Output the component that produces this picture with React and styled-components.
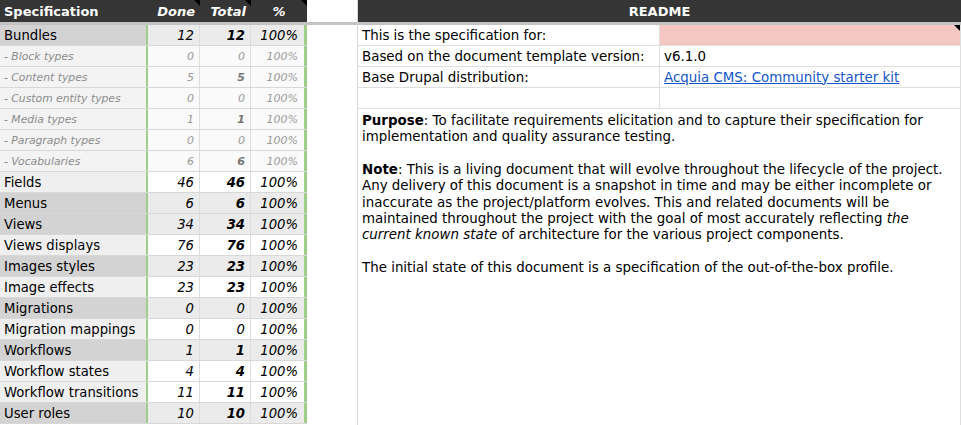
import React from 'react';
import styled, { createGlobalStyle, css } from 'styled-components';

const GlobalStyle = createGlobalStyle`
  html, body {
    margin: 0;
    padding: 0;
    background: #ffffff;
    font-family: "DejaVu Sans", Verdana, sans-serif;
    color: #000;
  }
`;

const Sheet = styled.div`
  display: flex;
  width: 961px;
  height: 425px;
  overflow: hidden;
`;

const Panel = styled.div`
  display: flex;
  flex-direction: column;
  width: ${p => p.$width};
  flex: ${p => (p.$grow ? '1' : 'none')};
  border-left: ${p => (p.$bordered ? '1px solid #d9d9d9' : 'none')};
`;

const HeaderBar = styled.div`
  display: grid;
  grid-template-columns: ${p => p.$cols || '1fr'};
  height: 22px;
  background: ${p => (p.$blank ? '#ffffff' : '#353535')};
  border-bottom: 3px solid #c3c3c3;
  color: #ffffff;
  font-weight: bold;
  font-size: 13px;
`;

const HeadCell = styled.div`
  position: relative;
  display: flex;
  align-items: center;
  justify-content: ${p => p.$align || 'flex-start'};
  padding: 0 ${p => (p.$align === 'flex-end' ? '5px' : '4px')};
  font-style: ${p => (p.$italic ? 'italic' : 'normal')};
  white-space: nowrap;
  ${p => p.$flag && css`
    &::after {
      content: '';
      position: absolute;
      top: 0;
      right: 0;
      border-top: 6px solid #000;
      border-left: 6px solid transparent;
    }
  `}
`;

const SpecRow = styled.div`
  display: grid;
  grid-template-columns: 148px 52px 51px 56px;
  height: 20px;
  border-bottom: 1px solid #d8d8d8;
`;

const tones = {
  dark: { label: '#d3d3d3', num: '#ebebeb' },
  light: { label: '#efefef', num: '#ffffff' },
  sub: { label: '#f3f3f3', num: '#fafafa' },
};

const Label = styled.div`
  display: flex;
  align-items: center;
  padding-left: 4px;
  background: ${p => tones[p.$tone].label};
  border-right: 2px solid #9fcd8a;
  white-space: nowrap;
  font-size: ${p => (p.$tone === 'sub' ? '10.8px' : '13.2px')};
  font-style: ${p => (p.$tone === 'sub' ? 'italic' : 'normal')};
  color: ${p => (p.$tone === 'sub' ? '#8c8c8c' : '#000')};
`;

const Num = styled.div`
  display: flex;
  align-items: center;
  justify-content: flex-end;
  padding-right: ${p => (p.$last ? '6px' : '5px')};
  background: ${p => tones[p.$tone].num};
  border-right: ${p => (p.$last ? '3px solid #9fcd8a' : '1px solid #dddddd')};
  font-style: italic;
  font-weight: ${p => (p.$bold ? 'bold' : 'normal')};
  font-size: ${p => (p.$tone === 'sub' ? '11px' : '13.2px')};
  color: ${p => (p.$tone === 'sub' ? (p.$bold ? '#777' : '#9a9a9a') : '#000')};
`;

const Spacer = styled.div`
  flex: 1;
  background: #ffffff;
`;

const InfoRow = styled.div`
  display: grid;
  grid-template-columns: 302px 1fr;
  height: 20px;
  border-bottom: 1px solid #dedede;
  font-size: 13.4px;
`;

const InfoCell = styled.div`
  position: relative;
  display: flex;
  align-items: center;
  padding-left: 4px;
  background: ${p => (p.$pink ? '#f4c7c3' : '#ffffff')};
  border-right: 1px solid #dedede;
  white-space: nowrap;
  ${p => p.$flag && css`
    &::after {
      content: '';
      position: absolute;
      top: 0;
      right: 0;
      border-top: 6px solid #000;
      border-left: 6px solid transparent;
    }
  `}
`;

const DocLink = styled.a`
  color: #1155cc;
  text-decoration: underline;
`;

const TextCell = styled.div`
  flex: 1;
  padding: 4px 4px 0 4px;
  font-size: 13.4px;
  line-height: 16.35px;
  border-right: 1px solid #dedede;
`;

const Line = styled.div`
  white-space: nowrap;
  min-height: 16.35px;
`;

const rows = [
  { label: 'Bundles', done: 12, total: 12, tone: 'dark' },
  { label: '- Block types', done: 0, total: 0, tone: 'sub' },
  { label: '- Content types', done: 5, total: 5, tone: 'sub' },
  { label: '- Custom entity types', done: 0, total: 0, tone: 'sub' },
  { label: '- Media types', done: 1, total: 1, tone: 'sub' },
  { label: '- Paragraph types', done: 0, total: 0, tone: 'sub' },
  { label: '- Vocabularies', done: 6, total: 6, tone: 'sub' },
  { label: 'Fields', done: 46, total: 46, tone: 'light' },
  { label: 'Menus', done: 6, total: 6, tone: 'dark' },
  { label: 'Views', done: 34, total: 34, tone: 'dark' },
  { label: 'Views displays', done: 76, total: 76, tone: 'light' },
  { label: 'Images styles', done: 23, total: 23, tone: 'dark' },
  { label: 'Image effects', done: 23, total: 23, tone: 'light' },
  { label: 'Migrations', done: 0, total: 0, tone: 'dark' },
  { label: 'Migration mappings', done: 0, total: 0, tone: 'light' },
  { label: 'Workflows', done: 1, total: 1, tone: 'dark' },
  { label: 'Workflow states', done: 4, total: 4, tone: 'light' },
  { label: 'Workflow transitions', done: 11, total: 11, tone: 'light' },
  { label: 'User roles', done: 10, total: 10, tone: 'dark' },
];

export default function App() {
  return (
    <>
      <GlobalStyle />
      <Sheet>
        <Panel $width="307px">
          <HeaderBar $cols="148px 52px 51px 56px">
            <HeadCell>Specification</HeadCell>
            <HeadCell $italic $align="flex-end" $flag>Done</HeadCell>
            <HeadCell $italic $align="flex-end" $flag>Total</HeadCell>
            <HeadCell $italic $align="center" $flag>%</HeadCell>
          </HeaderBar>
          {rows.map(r => (
            <SpecRow key={r.label}>
              <Label $tone={r.tone}>{r.label}</Label>
              <Num $tone={r.tone}>{r.done}</Num>
              <Num $tone={r.tone} $bold={r.total > 0}>{r.total}</Num>
              <Num $tone={r.tone} $last>100%</Num>
            </SpecRow>
          ))}
        </Panel>

        <Panel $width="50px">
          <HeaderBar $blank />
          <Spacer />
        </Panel>

        <Panel $grow $bordered>
          <HeaderBar>
            <HeadCell $align="center">README</HeadCell>
          </HeaderBar>
          <InfoRow>
            <InfoCell>This is the specification for:</InfoCell>
            <InfoCell $pink $flag />
          </InfoRow>
          <InfoRow>
            <InfoCell>Based on the document template version:</InfoCell>
            <InfoCell>v6.1.0</InfoCell>
          </InfoRow>
          <InfoRow>
            <InfoCell>Base Drupal distribution:</InfoCell>
            <InfoCell>
              <DocLink href="#">Acquia CMS: Community starter kit</DocLink>
            </InfoCell>
          </InfoRow>
          <InfoRow>
            <InfoCell />
            <InfoCell />
          </InfoRow>
          <TextCell>
            <Line><b>Purpose</b>: To facilitate requirements elicitation and to capture their specification for</Line>
            <Line>implementation and quality assurance testing.</Line>
            <Line />
            <Line><b>Note</b>: This is a living document that will evolve throughout the lifecycle of the project.</Line>
            <Line>Any delivery of this document is a snapshot in time and may be either incomplete or</Line>
            <Line>inaccurate as the project/platform evolves. This and related documents will be</Line>
            <Line>maintained throughout the project with the goal of most accurately reflecting <i>the</i></Line>
            <Line><i>current known state</i> of architecture for the various project components.</Line>
            <Line />
            <Line>The initial state of this document is a specification of the out-of-the-box profile.</Line>
          </TextCell>
        </Panel>
      </Sheet>
    </>
  );
}
